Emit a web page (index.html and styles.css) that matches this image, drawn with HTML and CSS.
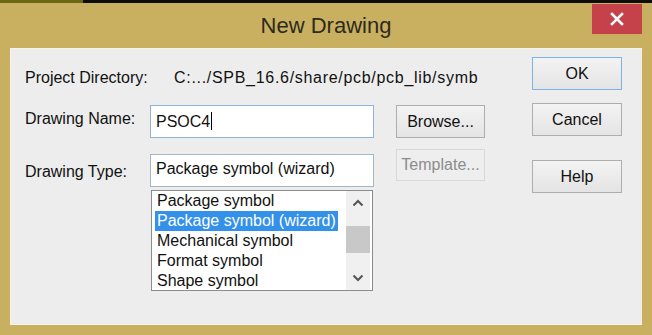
FILE: index.html
```html
<!DOCTYPE html>
<html lang="en">
<head>
  <meta charset="UTF-8">
  <meta name="viewport" content="width=device-width, initial-scale=1.0">
  <title>New Drawing</title>
  <link rel="stylesheet" href="styles.css">
</head>
<body>
  <!-- strip of the taskbar / window behind -->
  <div class="topstrip">
    <div class="topstrip-left"></div>
  </div>

  <div class="window">
    <div class="titlebar">
      <span class="title">New Drawing</span>
      <button class="close" aria-label="Close">
        <svg width="16" height="16" viewBox="0 0 16 16">
          <path d="M3 3 L13 13 M13 3 L3 13" stroke="#fff" stroke-width="2.6" stroke-linecap="square"/>
        </svg>
      </button>
    </div>

    <div class="client">
      <div class="form">
        <div class="row row-dir">
          <span class="label label-dir">Project Directory:</span>
          <span class="path">C:.../SPB_16.6/share/pcb/pcb_lib/symb</span>
        </div>

        <div class="row row-name">
          <label class="label label-name">Drawing Name:</label>
          <div class="field field-focus">PSOC4<span class="caret"></span></div>
          <button class="btn btn-side">Browse...</button>
        </div>

        <div class="row row-type">
          <label class="label label-type">Drawing Type:</label>
          <div class="combo-wrap">
            <div class="field combo">Package symbol (wizard)</div>
            <div class="listbox">
              <ul class="items">
                <li>Package symbol</li>
                <li><span class="selected">Package symbol (wizard)</span></li>
                <li>Mechanical symbol</li>
                <li>Format symbol</li>
                <li>Shape symbol</li>
              </ul>
              <div class="scrollbar">
                <div class="sb-btn">
                  <svg width="12" height="8" viewBox="0 0 12 8"><polyline points="1.5,6.5 6,2 10.5,6.5" fill="none" stroke="#555" stroke-width="2"/></svg>
                </div>
                <div class="sb-track"><div class="sb-thumb"></div></div>
                <div class="sb-btn">
                  <svg width="12" height="8" viewBox="0 0 12 8"><polyline points="1.5,1.5 6,6 10.5,1.5" fill="none" stroke="#555" stroke-width="2"/></svg>
                </div>
              </div>
            </div>
          </div>
          <button class="btn btn-side btn-disabled">Template...</button>
        </div>
      </div>

      <div class="actions">
        <button class="btn btn-action btn-default">OK</button>
        <button class="btn btn-action btn-cancel">Cancel</button>
        <button class="btn btn-action btn-help">Help</button>
      </div>
    </div>
  </div>
</body>
</html>
```

FILE: styles.css
```css
body{
  margin: 0;
  width: 652px;
  height: 335px;
  overflow: hidden;
  background-color: #c9b061;
  font-family: "Liberation Sans", Arial, sans-serif;
  color: #111;
}
.topstrip{
  height: 3px;
  background-color: #0e0d07;
}
.topstrip-left{
  width: 83px;
  height: 3px;
  background-color: #6c6714;
}
.window{
  padding: 0 10px 10px 10px;
}
.titlebar{
  position: relative;
  height: 45px;
  display: flex;
  justify-content: center;
  align-items: center;
}
.title{
  font-size: 22px;
  line-height: 26px;
  color: #2e2a1c;
}
.close{
  position: absolute;
  top: 1px;
  right: 0;
  width: 50px;
  height: 30px;
  border: none;
  padding: 0;
  background-color: #c6424a;
  display: flex;
  justify-content: center;
  align-items: center;
}

.client{
  height: 277px;
  box-sizing: border-box;
  background-color: #ededed;
  border-left: 1px solid #faf4e2;
  border-bottom: 1px solid #faf4e2;
  border-top: 1px solid #f6f2e6;
  padding: 0 20px 0 14px;
  display: flex;
  gap: 47px;
}
.form{
  width: 460px;
  padding-top: 17px;
}
.row{
  display: flex;
  align-items: flex-start;
  font-size: 16px;
  line-height: 20px;
}
.row-dir{
  height: 20px;
  padding-top: 2px;
}
.row-name{
  margin-top: 17px;
}
.row-type{
  margin-top: 11px;
}
.label{
  width: 125px;
  flex-shrink: 0;
}
.label-dir{
  width: 149px;
}
.label-name{
  margin-top: 4px;
}
.label-type{
  margin-top: 13px;
}
.path{
  white-space: nowrap;
  letter-spacing: 0.7px;
}

.field{
  width: 224px;
  height: 33px;
  box-sizing: border-box;
  background-color: #fff;
  border: 1px solid #8fb4dc;
  padding: 6px 5px 0 5px;
  white-space: nowrap;
}
.caret{
  display: inline-block;
  width: 0;
  height: 18px;
  border-left: 1px solid #000;
  vertical-align: -3px;
  margin-left: 1px;
}
.combo-wrap{
  position: relative;
  margin-top: 5px;
}
.combo{
  border-color: #a3b6cc;
  padding-top: 4px;
}

.listbox{
  position: absolute;
  top: 36px;
  left: 1px;
  width: 222px;
  height: 101px;
  box-sizing: border-box;
  background-color: #fff;
  border: 1px solid #8c8c8c;
  display: flex;
  overflow: hidden;
}
.items{
  list-style: none;
  margin: 0;
  padding: 0 0 0 2px;
  flex: 1;
  height: 99px;
  overflow: hidden;
}
.items li{
  height: 20px;
  line-height: 20px;
  padding-left: 3px;
  white-space: nowrap;
}
.items li .selected{
  display: inline-block;
  margin-left: -2px;
  padding: 0 2px;
  background-color: #3391ea;
  color: #fff;
}
.scrollbar{
  width: 24px;
  margin-right: 2px;
  background-color: #f0f0f0;
  display: flex;
  flex-direction: column;
}
.sb-btn{
  height: 24px;
  display: flex;
  justify-content: center;
  align-items: center;
}
.sb-track{
  flex: 1;
}
.sb-thumb{
  margin: 11px 0 0 0;
  height: 27px;
  background-color: #c8c8c8;
}

.btn{
  height: 33px;
  box-sizing: border-box;
  border: 1px solid #adadad;
  background: linear-gradient(#f3f3f3, #e4e4e4);
  font-family: "Liberation Sans", Arial, sans-serif;
  font-size: 16px;
  color: #111;
  padding: 0;
}
.btn-side{
  width: 89px;
  margin-left: 22px;
}
.btn-disabled{
  height: 32px;
  border-color: #d8d8d8;
  background: #eeeeee;
  color: #8c8c8c;
}
.actions{
  width: 90px;
  padding-top: 8px;
  display: flex;
  flex-direction: column;
}
.btn-action{
  width: 90px;
}
.btn-default{
  border-color: #7db2e8;
}
.btn-cancel{
  margin-top: 13px;
}
.btn-help{
  margin-top: 24px;
}
```
